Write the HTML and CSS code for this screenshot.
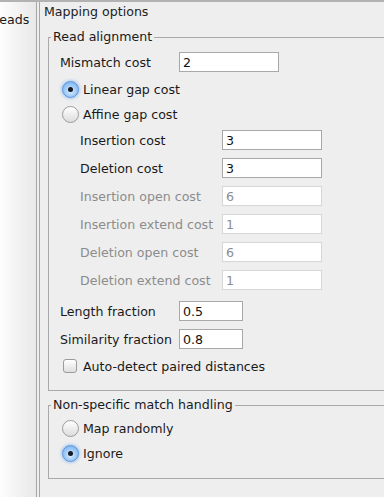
FILE: index.html
```html
<!DOCTYPE html>
<html lang="en">
<head>
    <meta charset="UTF-8">
    <meta name="viewport" content="width=device-width, initial-scale=1.0">
    <title>Mapping options</title>
    <link rel="stylesheet" href="styles.css">
</head>
<body>
    <div class="frame">
        <div class="side">
            <div class="side-item">Reads</div>
        </div>
        <div class="main">
            <div class="title">Mapping options</div>

            <fieldset class="group">
                <legend>Read alignment</legend>
                <div class="row">
                    <label class="lbl">Mismatch cost</label>
                    <input class="field" type="text" value="2">
                </div>
                <label class="choice first"><span class="radio on"></span>Linear gap cost</label>
                <label class="choice second"><span class="radio"></span>Affine gap cost</label>
                <div class="row sub">
                    <label class="lbl">Insertion cost</label>
                    <input class="field" type="text" value="3">
                </div>
                <div class="row sub">
                    <label class="lbl">Deletion cost</label>
                    <input class="field" type="text" value="3">
                </div>
                <div class="row sub off">
                    <label class="lbl">Insertion open cost</label>
                    <input class="field" type="text" value="6" disabled>
                </div>
                <div class="row sub off">
                    <label class="lbl">Insertion extend cost</label>
                    <input class="field" type="text" value="1" disabled>
                </div>
                <div class="row sub off">
                    <label class="lbl">Deletion open cost</label>
                    <input class="field" type="text" value="6" disabled>
                </div>
                <div class="row sub off">
                    <label class="lbl">Deletion extend cost</label>
                    <input class="field" type="text" value="1" disabled>
                </div>
                <div class="row spaced">
                    <label class="lbl">Length fraction</label>
                    <input class="field short" type="text" value="0.5">
                </div>
                <div class="row">
                    <label class="lbl">Similarity fraction</label>
                    <input class="field short" type="text" value="0.8">
                </div>
                <label class="check-row"><span class="check"></span>Auto-detect paired distances</label>
            </fieldset>

            <fieldset class="group second-group">
                <legend>Non-specific match handling</legend>
                <label class="choice tall"><span class="radio"></span>Map randomly</label>
                <label class="choice tall"><span class="radio on"></span>Ignore</label>
            </fieldset>
        </div>
    </div>
</body>
</html>
```

FILE: styles.css
```css
body {
    margin: 0;
    background: #eeeeee;
    font-family: "DejaVu Sans", sans-serif;
    font-size: 12.6px;
    color: #1a1a1a;
    overflow: hidden;
}
.frame {
    display: flex;
    height: 497px;
    border-top: 2px solid #b2b2b2;
    box-sizing: border-box;
}
.side {
    width: 36px;
    flex: none;
    border-right: 1px solid #a6a6a6;
    background: linear-gradient(to right, #fdfdfd, #e8e8e8);
    overflow: hidden;
}
.side-item {
    margin-left: -9px;
    padding-top: 10px;
    line-height: 16px;
    white-space: nowrap;
}
.main {
    flex: 1;
    margin-left: 2px;
    border-left: 1px solid #a6a6a6;
    padding-left: 4px;
    overflow: hidden;
}
.title {
    height: 27px;
    line-height: 20px;
    color: #222;
}
.group {
    margin: 0 -40px 0 4px;
    padding: 3px 0 11px 11px;
    border: 1px solid #a9a9a9;
    min-width: 0;
}
.group legend {
    line-height: 16px;
    padding: 0 2px;
    margin-left: -9px;
}
.second-group {
    margin-top: 6px;
    padding-bottom: 12px;
}
.row {
    display: flex;
    align-items: center;
    height: 28px;
}
.lbl {
    width: 119px;
    flex: none;
}
.row.sub {
    padding-left: 20px;
}
.row.sub .lbl {
    width: 142px;
}
.row.spaced {
    margin-top: 3px;
}
.field {
    box-sizing: border-box;
    width: 100px;
    height: 20px;
    border: 1px solid #a8a8a8;
    background: #fff;
    padding: 0 3px;
    font: inherit;
    color: #111;
    outline: none;
}
.field.short {
    width: 64px;
}
.row.off .lbl {
    color: #8c8c8c;
}
.row.off .field {
    border-color: #d6d6d6;
    color: #8c8c8c;
    background: #fff;
}
.choice {
    display: flex;
    align-items: center;
    gap: 4px;
    padding-left: 2px;
}
.choice.first {
    height: 26px;
}
.choice.second {
    height: 24px;
}
.choice.tall {
    height: 25px;
}
.radio {
    position: relative;
    width: 17px;
    height: 17px;
    box-sizing: border-box;
    border-radius: 50%;
    border: 1px solid #9c9c9c;
    background: linear-gradient(#ffffff, #dcdcdc);
    flex: none;
}
.radio.on {
    border-color: #5a93dc;
    background: radial-gradient(circle at 50% 60%, #e4f1ff 0, #a8d0f8 40%, #6aa8ee 100%);
    box-shadow: 0 0 3px 1px rgba(120, 180, 245, 0.6);
}
.radio.on::after {
    content: "";
    position: absolute;
    left: 5px;
    top: 5px;
    width: 5px;
    height: 5px;
    border-radius: 50%;
    background: #151a24;
}
.check-row {
    display: flex;
    align-items: center;
    gap: 6px;
    height: 26px;
    padding-left: 3px;
}
.check {
    width: 14px;
    height: 14px;
    box-sizing: border-box;
    border: 1px solid #9c9c9c;
    border-radius: 3px;
    background: linear-gradient(#ffffff, #dedede);
}
```
